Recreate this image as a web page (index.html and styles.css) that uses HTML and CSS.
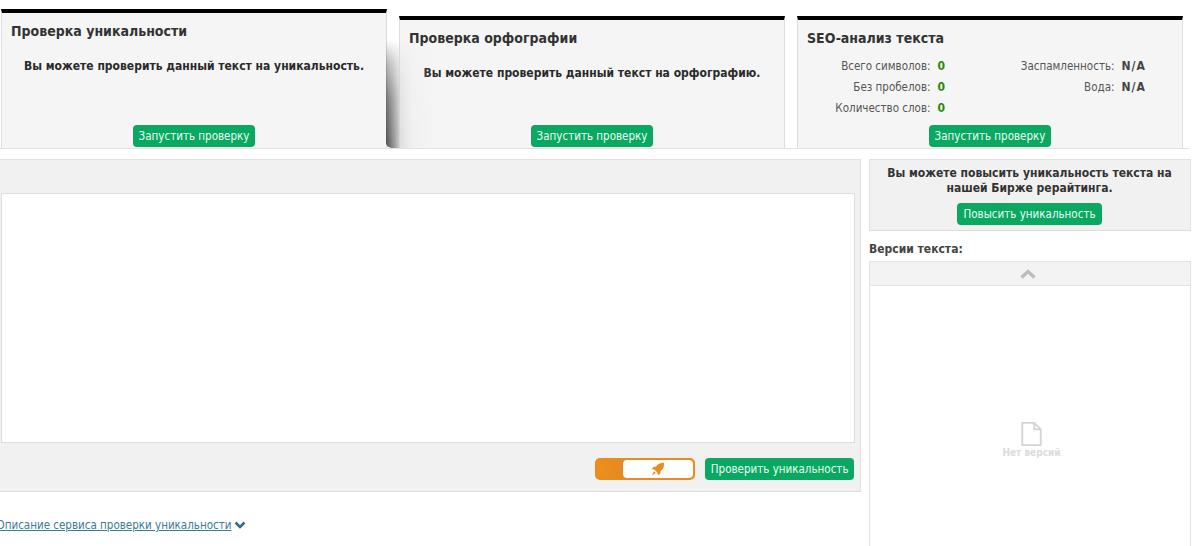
FILE: index.html
```html
<!DOCTYPE html>
<html lang="ru">
<head>
<meta charset="utf-8">
<title>Проверка уникальности</title>
<link rel="stylesheet" href="styles.css">
</head>
<body>
<div class="page">
  <section class="checks">
    <article class="check check-lifted">
      <h2 class="check-title">Проверка уникальности</h2>
      <p class="check-note">Вы можете проверить данный текст на уникальность.</p>
      <a class="btn check-btn">Запустить проверку</a>
    </article>
    <article class="check">
      <h2 class="check-title">Проверка орфографии</h2>
      <p class="check-note">Вы можете проверить данный текст на орфографию.</p>
      <a class="btn check-btn">Запустить проверку</a>
    </article>
    <article class="check">
      <h2 class="check-title">SEO-анализ текста</h2>
      <div class="seo">
        <dl class="seo-col seo-col-left">
          <div class="seo-row"><dt>Всего символов:</dt><dd class="ok">0</dd></div>
          <div class="seo-row"><dt>Без пробелов:</dt><dd class="ok">0</dd></div>
          <div class="seo-row"><dt>Количество слов:</dt><dd class="ok">0</dd></div>
        </dl>
        <dl class="seo-col seo-col-right">
          <div class="seo-row"><dt>Заспамленность:</dt><dd>N/A</dd></div>
          <div class="seo-row"><dt>Вода:</dt><dd>N/A</dd></div>
        </dl>
      </div>
      <a class="btn check-btn">Запустить проверку</a>
    </article>
  </section>
  <section class="work">
    <div class="main">
      <div class="editor">
        <div class="editor-field"></div>
        <div class="editor-actions">
          <div class="toggle">
            <span class="toggle-on"></span>
            <span class="toggle-off">
              <svg class="rocket" viewBox="0 0 16 16" width="14" height="14"><path d="M15 1c-4-.3-7 1-9.200 4L3 5.300.8 8l3 .5L7.500 12.200l.5 3 2.700-2.200.3-2.800C14 8 15.300 5 15 1z" fill="#e98b1e"/><path d="M3.500 10.500 1 15l4.500-2.500z" fill="#e98b1e"/></svg>
            </span>
          </div>
          <a class="btn btn-check">Проверить уникальность</a>
        </div>
      </div>
      <div class="about">
        <a class="about-link">Описание сервиса проверки уникальности</a>
        <svg class="about-icon" viewBox="0 0 12 8" width="12" height="8"><path d="M1.500 1.500 6 6l4.500-4.500" fill="none" stroke="#2f6f88" stroke-width="2.600"/></svg>
      </div>
    </div>
    <aside class="side">
      <div class="boost">
        <p class="boost-text">Вы можете повысить уникальность текста на нашей Бирже рерайтинга.</p>
        <a class="btn">Повысить уникальность</a>
      </div>
      <h3 class="versions-title">Версии текста:</h3>
      <div class="versions">
        <div class="versions-head">
          <svg viewBox="0 0 16 10" width="16" height="10"><path d="M1.500 8.500 8 2.500l6.500 6" fill="none" stroke="#bdbdbd" stroke-width="3.400"/></svg>
        </div>
        <div class="versions-body">
          <svg class="doc" viewBox="0 0 22 26" width="21" height="24"><path d="M1 1h13l7 7v17H1z M14 1v7h7" fill="none" stroke="#d4d4d4" stroke-width="2"/></svg>
          <span class="versions-empty">Нет версий</span>
        </div>
      </div>
    </aside>
  </section>
</div>
</body>
</html>
```
FILE: styles.css
```css
* { box-sizing: border-box; }
html, body { margin: 0; height: 100%; overflow: hidden; background: #fff; }
body { font-family: "DejaVu Sans Condensed", "DejaVu Sans", sans-serif; font-size: 11.5px; color: #333; }
.page { width: 1195px; height: 546px; overflow: hidden; }
.checks { display: flex; gap: 12px; align-items: flex-end; height: 149px; padding: 0 0 0 1px; overflow: hidden; border-bottom: 1px solid #e2e2e2; width: 1190px; }
.check { position: relative; flex: none; width: 386px; height: 132px; display: flex; flex-direction: column; align-items: center; background: #f5f5f5; border: 1px solid #ddd; border-top: 4px solid #000; border-bottom: 0; padding: 0 9px; }
.check-lifted { height: 139px; z-index: 1; }
.check-lifted::after { content: ""; position: absolute; left: 100%; bottom: 0; width: 48px; height: 108px; border-bottom-left-radius: 5px; z-index: -1; background: linear-gradient(to right, rgba(70,70,70,.95), rgba(165,165,165,.7) 26%, rgba(205,205,205,.6) 28%, rgba(235,235,235,.45) 55%, rgba(245,245,245,0) 100%); -webkit-mask-image: linear-gradient(to top, #000, rgba(0,0,0,.8) 45%, rgba(0,0,0,.4) 80%, transparent); mask-image: linear-gradient(to top, #000, rgba(0,0,0,.8) 45%, rgba(0,0,0,.4) 80%, transparent); }
.check-title { align-self: stretch; margin: 9px 0 0; font-size: 14px; line-height: 18px; font-weight: 700; color: #333; }
.check-note { margin: 18px 0 0; font-size: 12px; line-height: 16px; font-weight: 700; color: #2a2a2a; text-align: center; white-space: nowrap; }
.check-btn { margin-top: auto; margin-bottom: 1px; }
.btn { display: inline-block; height: 22px; padding: 0 6px; line-height: 22px; font-size: 11.5px; color: #e9fff5; background: #0aa861; border-radius: 4px; white-space: nowrap; }
.btn-check { padding: 0 5.500px; }
.seo { align-self: stretch; display: flex; margin-top: 11px; }
.seo-col { margin: 0; display: flex; flex-direction: column; gap: 5px; }
.seo-col-left { width: 129px; margin-left: 9.500px; }
.seo-col-right { width: 137px; margin-left: 64px; }
.seo-row { display: flex; justify-content: flex-end; height: 16px; line-height: 16px; color: #555; white-space: nowrap; }
.seo-row dd { margin: 0 0 0 7px; font-weight: 700; font-size: 12px; color: #444; }
.seo-col-right dd { width: 25px; letter-spacing: 1px; }
.seo-row dd.ok { color: #2a8a0c; width: 8px; }
.work { display: flex; gap: 8px; margin-top: 10px; margin-left: -10px; }
.main { width: 871px; flex: none; }
.editor { height: 333px; background: #f1f1f1; border-bottom: 1px solid #ddd; border-top: 1px solid #e2e2e2; border-right: 1px solid #e2e2e2; padding: 33px 5px 0 11px; display: flex; flex-direction: column; }
.editor-field { height: 250px; background: #fff; border: 1px solid #ddd; }
.editor-actions { display: flex; justify-content: flex-end; align-items: center; gap: 10px; margin-top: 15px; padding-right: 1px; }
.toggle { display: flex; width: 100px; height: 22px; border: 2px solid #e98b1e; border-radius: 5px; background: #e98b1e; overflow: hidden; }
.toggle-on { width: 26px; background: linear-gradient(to right, #ec8f1c, #e58a22); }
.toggle-off { flex: 1; display: flex; align-items: center; justify-content: center; background: #fff; border-radius: 4px; }
.about { display: flex; align-items: center; gap: 3px; margin-top: 25px; margin-left: 6.500px; height: 16px; }
.about-link { color: #3a7c95; text-decoration: underline; font-size: 11.5px; }
.side { width: 322px; flex: none; }
.boost { height: 72px; background: #f1f1f1; border: 1px solid #e2e2e2; border-bottom-color: #ddd; display: flex; flex-direction: column; align-items: center; padding: 6px 11px 0 10px; }
.boost-text { margin: 0 0 8px; font-size: 12px; font-weight: 700; line-height: 14.500px; text-align: center; }
.versions-title { margin: 10px 0 4px; font-size: 12px; line-height: 16px; font-weight: 700; color: #444; }
.versions { height: 285px; border: 1px solid #e2e2e2; border-bottom: 0; }
.versions-head { height: 24px; background: #f3f3f3; border-bottom: 1px solid #e2e2e2; display: flex; align-items: center; justify-content: center; padding-right: 4px; }
.versions-body { height: 261px; display: flex; flex-direction: column; align-items: center; padding: 136px 0 0 3px; }
.versions-empty { margin-top: 0; font-size: 10px; line-height: 13px; font-weight: 700; color: #dcdcdc; }
```
